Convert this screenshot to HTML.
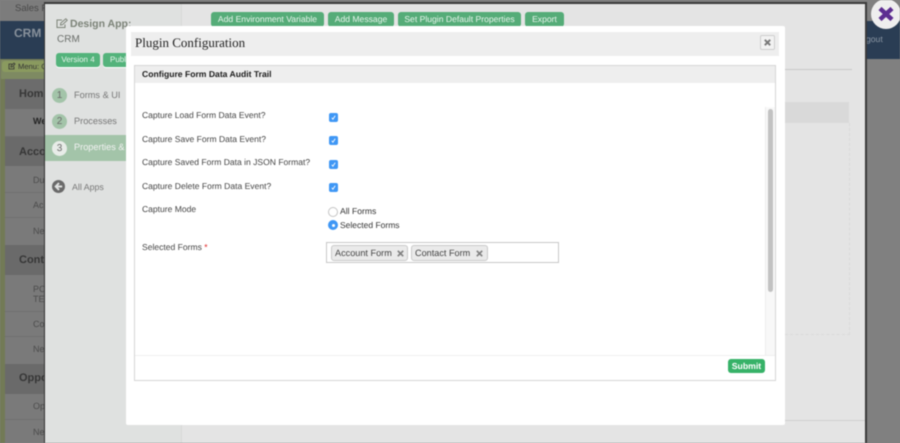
<!DOCTYPE html>
<html><head><meta charset="utf-8"><style>
html,body{margin:0;padding:0}
body{width:900px;height:443px;overflow:hidden;position:relative;background:#808080;font-family:"Liberation Sans",sans-serif;color:#444;text-rendering:geometricPrecision}
#r{position:absolute;left:0;top:0;width:900px;height:443px;overflow:hidden;filter:blur(.45px)}
.a{position:absolute;white-space:nowrap}
.g{position:absolute;background:#55ac78;color:#e8f4ec;border-radius:3px;font-size:8.6px;line-height:15px;height:15px;text-align:center;white-space:nowrap;box-shadow:0 1px 0 #fff}
.l{position:absolute;left:142px;font-size:8.55px;line-height:11px;color:#444;white-space:nowrap}
.c{position:absolute;left:328.5px;width:9px;height:9px;background:#3f97f5;border-radius:2px;color:#fff}
.c svg{position:absolute;left:0;top:0}
.s{position:absolute;left:5px;width:40px;height:1px;background:#6f6f6f}
.sh{position:absolute;left:5px;width:40px;background:#6a6a6a}
.st{position:absolute;color:#363636;font-size:11px;font-weight:bold;line-height:13px;white-space:nowrap}
.si{position:absolute;left:33px;color:#4c4c4c;font-size:9px;line-height:11px}
.n{position:absolute;left:52px;width:15px;height:15px;border-radius:50%;background:#a3c4a9;color:#6a6a6a;font-size:10px;line-height:15px;text-align:center}
.t{position:absolute;top:245px;height:14px;background:#eaeaea;border:1px solid #c9c9c9;border-radius:3px;font-size:9.15px;line-height:14px;color:#444;white-space:nowrap}
.t svg{position:absolute;top:4px}
</style></head><body><div id="r">
<div class="a" style="left:0;top:0;width:45px;height:21px;background:#7c7c7c"></div>
<div class="a" style="left:15px;top:3px;font-size:9.5px;line-height:11px;color:#484848">Sales F</div>
<div class="a" style="left:0;top:21px;width:900px;height:38px;background:#2a3d54"></div>
<div class="a" style="left:14px;top:26px;font-size:12px;line-height:14px;font-weight:bold;color:#88919b">CRM</div>
<div class="a" style="left:866px;top:34px;font-size:8.6px;line-height:11px;color:#8a95a2">gout</div>
<div class="a" style="left:0;top:59px;width:45px;height:384px;background:#727a56"></div>
<div class="a" style="left:1px;top:60px;width:44px;height:19px;background:#7e8a62"></div>
<div class="a" style="left:2px;top:61px;width:43px;height:11px;background:#8a9a5f;border-radius:3px 0 0 3px"></div>
<div class="a" style="left:18px;top:62px;font-size:7.600px;line-height:9px;color:#333">Menu: C</div>
<svg class="a" style="left:8px;top:62px" width="8" height="8" viewBox="0 0 8 8"><path d="M6 4.500V7H1V2H4M3 5 3.200 3.500 6 1 7 2 4.500 4.800Z" fill="none" stroke="#333" stroke-width=".8"/></svg>
<div class="a" style="left:5px;top:79px;width:40px;height:364px;background:#7a7a7a"></div>
<div class="sh" style="top:79px;height:30px;background:#6c6c6c"></div>
<div class="sh" style="top:136px;height:30px"></div>
<div class="sh" style="top:245px;height:30px"></div>
<div class="sh" style="top:364px;height:30px"></div>
<div class="st" style="left:19px;top:88px">Home</div>
<div class="a" style="left:33px;top:116px;font-size:9px;line-height:11px;font-weight:bold;color:#222">We</div>
<div class="st" style="left:19px;top:146px">Acco</div>
<div class="st" style="left:19px;top:254px">Cont</div>
<div class="st" style="left:19px;top:372px">Oppo</div>
<div class="si" style="top:175px">Du</div>
<div class="si" style="top:200px">Ac</div>
<div class="si" style="top:226px">Ne</div>
<div class="si" style="top:284px">PC</div>
<div class="si" style="top:294px">TE</div>
<div class="si" style="top:319px">Co</div>
<div class="si" style="top:344px">Ne</div>
<div class="si" style="top:401px">Op</div>
<div class="si" style="top:427px">Ne</div>
<div class="s" style="top:136px"></div><div class="s" style="top:192px"></div><div class="s" style="top:217px"></div><div class="s" style="top:311px"></div><div class="s" style="top:336px"></div><div class="s" style="top:419px"></div>

<div class="a" style="left:44px;top:2px;width:823px;height:441px;background:#e4e4e4;border-left:1px solid #333;border-top:2px solid #3a3a3a;border-right:2px solid #3a3a3a;box-sizing:border-box"></div>
<div class="a" style="left:45px;top:4px;width:136px;height:439px;background:#dfe1e0"></div>
<div class="a" style="left:45px;top:135px;width:136px;height:26px;background:#a3c4a9"></div>
<div class="a" style="left:181px;top:4px;width:1px;height:439px;background:#d9d9d9"></div>
<svg class="a" style="left:56px;top:18px" width="12" height="11" viewBox="0 0 12 11"><path d="M9 6.500V9.500H1V2H6M4.500 7 4.800 5 9.800 .8 11.200 2.200 6.500 6.700Z" fill="none" stroke="#7c8378" stroke-width="1"/></svg>
<div class="a" style="left:70px;top:17px;font-size:10.5px;line-height:14px;font-weight:bold;color:#7c8378">Design App:</div>
<div class="a" style="left:57px;top:33px;font-size:10px;line-height:13px;color:#6a6e6a">CRM</div>
<div class="g" style="left:56px;top:53px;width:44px;height:14px;line-height:14px;background:#53b37b;font-size:8px">Version 4</div>
<div class="g" style="left:103px;top:53px;width:40px;height:14px;line-height:14px;background:#53b37b;font-size:8px;text-align:left;text-indent:7px">Publish</div>
<div class="n" style="top:88px">1</div><div class="a" style="left:74px;top:89px;font-size:9.2px;line-height:12px;color:#777">Forms &amp; UI</div>
<div class="n" style="top:114px">2</div><div class="a" style="left:74px;top:115px;font-size:9.2px;line-height:12px;color:#777">Processes</div>
<div class="n" style="top:141px;background:#e8ece8">3</div><div class="a" style="left:74px;top:141px;font-size:9.2px;line-height:12px;color:#f2f2f2">Properties &amp; Plugins</div>
<svg class="a" style="left:52px;top:180px" width="13" height="13" viewBox="0 0 12 12"><circle cx="6" cy="6" r="6" fill="#6a6a6a"/><path d="M6.500 2.800 3.400 6l3.100 3.200M3.600 6H9.400" stroke="#dfe1e0" stroke-width="1.800" fill="none"/></svg>
<div class="a" style="left:72px;top:182px;font-size:8.8px;line-height:11px;color:#777">All Apps</div>

<div class="g" style="left:211px;top:12px;width:113px">Add Environment Variable</div>
<div class="g" style="left:328px;top:12px;width:66px">Add Message</div>
<div class="g" style="left:398px;top:12px;width:123px">Set Plugin Default Properties</div>
<div class="g" style="left:525px;top:12px;width:39px">Export</div>
<div class="a" style="left:785px;top:69px;width:67px;height:1px;background:#c8c8c8"></div>
<div class="a" style="left:785px;top:102px;width:64px;height:21px;background:#d9d9d9"></div>
<div class="a" style="left:785px;top:123px;width:65px;height:212px;border-right:1px dashed #dadada;border-bottom:1px dashed #dadada;box-sizing:border-box"></div>
<div class="a" style="left:785px;top:420px;width:80px;height:1px;background:#d0d0d0"></div>

<svg class="a" style="left:870px;top:-1px" width="30" height="30" viewBox="0 0 30 30"><circle cx="16" cy="15" r="15" fill="#eeeeee"/><path d="M10 9.500 22 20.500M22 9.500 10 20.500" stroke="#5d2d91" stroke-width="4.500"/></svg>

<div class="a" style="left:126px;top:26px;width:659px;height:399px;background:#fff;border-radius:2px"></div>
<div class="a" style="left:131px;top:32px;width:648px;height:24px;background:#eeeeee"></div>
<div class="a" style="left:135px;top:35px;font-family:'Liberation Serif',serif;font-size:13px;line-height:16px;color:#222">Plugin Configuration</div>
<div class="a" style="left:760px;top:35px;width:13px;height:13px;border:1px solid #cfcfcf;border-radius:2px;background:#f2f2f2"><svg style="position:absolute;left:3px;top:3px" width="7" height="7" viewBox="0 0 7 7"><path d="M.8.800 6.200 6.200M6.200.800.800 6.200" stroke="#777" stroke-width="1.900"/></svg></div>

<div class="a" style="left:134px;top:65px;width:642px;height:316px;border:1px solid #d6d6d6;box-sizing:border-box;background:#fff"></div>
<div class="a" style="left:135px;top:66px;width:640px;height:17px;background:#eeeeee"></div>
<div class="a" style="left:142px;top:69px;font-size:8.6px;line-height:11px;font-weight:bold;color:#1c1c1c">Configure Form Data Audit Trail</div>
<div class="a" style="left:135px;top:355px;width:640px;height:1px;background:#efefef"></div>
<div class="a" style="left:765px;top:107px;width:10px;height:248px;background:#f8f8f8;border-left:1px solid #ededed;box-sizing:border-box"></div>
<div class="a" style="left:768px;top:109px;width:5px;height:183px;background:#c2c2c2;border-radius:3px"></div>

<div class="l" style="top:110px">Capture Load Form Data Event?</div>
<div class="l" style="top:134px">Capture Save Form Data Event?</div>
<div class="l" style="top:157px">Capture Saved Form Data in JSON Format?</div>
<div class="l" style="top:181px">Capture Delete Form Data Event?</div>
<div class="l" style="top:204px">Capture Mode</div>
<div class="l" style="top:242px">Selected Forms <span style="color:#e02020">*</span></div>
<div class="c" style="top:113px"><svg width="9" height="9" viewBox="0 0 9 9"><path d="M2.800 4.800 3.900 6.200 6.200 2.800" stroke="#fff" stroke-width=".9" fill="none"/></svg></div>
<div class="c" style="top:136px"><svg width="9" height="9" viewBox="0 0 9 9"><path d="M2.800 4.800 3.900 6.200 6.200 2.800" stroke="#fff" stroke-width=".9" fill="none"/></svg></div>
<div class="c" style="top:160px"><svg width="9" height="9" viewBox="0 0 9 9"><path d="M2.800 4.800 3.900 6.200 6.200 2.800" stroke="#fff" stroke-width=".9" fill="none"/></svg></div>
<div class="c" style="top:183px"><svg width="9" height="9" viewBox="0 0 9 9"><path d="M2.800 4.800 3.900 6.200 6.200 2.800" stroke="#fff" stroke-width=".9" fill="none"/></svg></div>
<div class="a" style="left:328px;top:207px;width:8px;height:8px;border:1px solid #c4c4c4;border-radius:50%;background:#fff"></div>
<div class="a" style="left:328px;top:220px;width:10px;height:10px;border-radius:50%;background:#3f97f5"><div style="position:absolute;left:3.500px;top:3.500px;width:3px;height:3px;border-radius:50%;background:#fff"></div></div>
<div class="a" style="left:340px;top:206px;font-size:8.6px;line-height:11px;color:#333">All Forms</div>
<div class="a" style="left:340px;top:220px;font-size:8.5px;line-height:11px;color:#333">Selected Forms</div>
<div class="a" style="left:326px;top:242px;width:233px;height:21px;border:1px solid #c8c8c8;box-sizing:border-box;background:#fff"></div>
<div class="t" style="left:331px;width:72px;padding-left:3px">Account Form<svg style="left:65px" width="7" height="7" viewBox="0 0 7 7"><path d="M.8.800 6.200 6.200M6.200.800.800 6.200" stroke="#808080" stroke-width="1.700"/></svg></div>
<div class="t" style="left:411px;width:72px;padding-left:3px">Contact Form<svg style="left:64px" width="7" height="7" viewBox="0 0 7 7"><path d="M.8.800 6.200 6.200M6.200.800.800 6.200" stroke="#808080" stroke-width="1.700"/></svg></div>
<div class="a" style="left:728px;top:359px;width:37px;height:14px;background:#37b268;border-radius:3px;color:#fff;font-size:8.700px;font-weight:bold;line-height:14px;text-align:center">Submit</div>
</div></body></html>
